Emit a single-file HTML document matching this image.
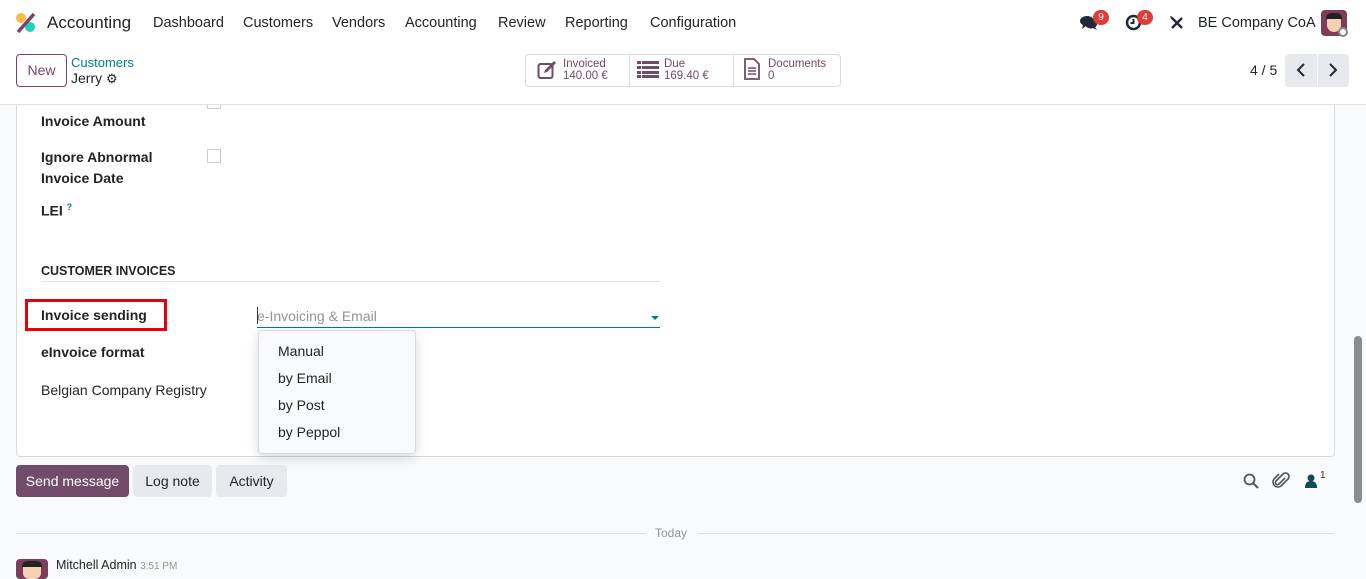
<!DOCTYPE html>
<html><head><meta charset="utf-8"><style>
*{box-sizing:border-box;margin:0;padding:0}
body{width:1366px;height:573px;overflow:hidden;background:#f9fafb;font-family:"Liberation Sans",sans-serif;color:#212529;font-size:14px;position:relative}
.abs{position:absolute}
.nav{top:0;left:0;width:1366px;height:46px;background:#fff}
.nav span.m{position:absolute;top:15px;font-size:14.5px;color:#212529}
.cp{top:46px;left:0;width:1366px;height:59px;background:#fff;border-bottom:1px solid #dee2e6}
.card{left:16px;top:105px;width:1319px;height:352px;background:#fff;border:1px solid #d8dadd;border-top:none;border-radius:0 0 4px 4px}
.lbl{position:absolute;left:41px;font-size:14px;color:#212529}
.b{font-weight:bold}
.badge{position:absolute;background:#e03a3a;color:#fff;font-size:10px;border-radius:8px;height:15px;min-width:16px;text-align:center;line-height:15px}
.btn{position:absolute;top:465px;height:32px;border-radius:4px;font-size:14px;line-height:32px;text-align:center}
</style></head><body>
<div class="abs nav">
 <svg class="abs" style="left:15px;top:12px" width="22" height="22" viewBox="0 0 22 22"><circle cx="6" cy="6" r="5" fill="#fbb945"/><circle cx="15" cy="15" r="5" fill="#1ad3bb"/><path d="M19 2L3 20" stroke="#7a4269" stroke-width="3.5"/></svg>
 <span class="m" style="left:47px;top:13px;font-size:17px">Accounting</span>
 <span class="m" style="left:153px">Dashboard</span>
 <span class="m" style="left:243px">Customers</span>
 <span class="m" style="left:332px">Vendors</span>
 <span class="m" style="left:405px">Accounting</span>
 <span class="m" style="left:498px">Review</span>
 <span class="m" style="left:565px">Reporting</span>
 <span class="m" style="left:650px">Configuration</span>
 <svg class="abs" style="left:1080px;top:15px" width="18" height="16" viewBox="0 0 18 16"><ellipse cx="7" cy="6" rx="7" ry="5" fill="#1f2937"/><ellipse cx="11" cy="9" rx="6" ry="4.5" fill="#1f2937"/><path d="M3 10l-1 4 4-3zM15 12l2 3-4-2z" fill="#1f2937"/></svg>
 <div class="badge" style="left:1093px;top:10px">9</div>
 <svg class="abs" style="left:1125px;top:14px" width="17" height="17" viewBox="0 0 17 17"><circle cx="8.5" cy="8.5" r="6.5" fill="none" stroke="#1f2937" stroke-width="2.5"/><path d="M8.5 5v4h-3" stroke="#1f2937" stroke-width="2" fill="none"/></svg>
 <div class="badge" style="left:1137px;top:10px">4</div>
 <svg class="abs" style="left:1169px;top:15px" width="16" height="16" viewBox="0 0 16 16"><path d="M3 3l10 10M13 3L3 13" stroke="#1f2937" stroke-width="2.4"/><path d="M1 1l3 1 -2 2z" fill="#1f2937"/></svg>
 <span class="m" style="left:1198px">BE Company CoA</span>
 <div class="abs" style="left:1321px;top:10px;width:26px;height:26px;border-radius:4px;background:#7d3c5a"><div class="abs" style="left:6px;top:5px;width:14px;height:17px;background:#f4d1b5;border-radius:6px 6px 7px 7px"></div><div class="abs" style="left:5px;top:3px;width:16px;height:6px;background:#222;border-radius:5px 5px 0 0"></div><div class="abs" style="left:17px;top:17px;width:10px;height:10px;border-radius:50%;background:#fff;border:2px solid #888"></div></div>
</div>
<div class="abs cp">
 <div class="abs" style="left:16px;top:8px;width:51px;height:33px;border:1px solid #7a4269;border-radius:4px;color:#7a4269;text-align:center;line-height:31px;font-size:14px">New</div>
 <div class="abs" style="left:71px;top:9px;color:#017e84;font-size:13px">Customers</div>
 <div class="abs" style="left:71px;top:24px;font-size:14px">Jerry <span style="font-size:13px">⚙</span></div>
 <div class="abs" style="left:525px;top:8px;width:316px;height:33px;border:1px solid #d8dadd;border-radius:4px"></div>
 <div class="abs" style="left:629px;top:9px;width:1px;height:31px;background:#d8dadd"></div>
 <div class="abs" style="left:733px;top:9px;width:1px;height:31px;background:#d8dadd"></div>
 <svg class="abs" style="left:537px;top:14px" width="22" height="20" viewBox="0 0 22 20"><rect x="1.5" y="4" width="14" height="14" rx="2" fill="none" stroke="#714b67" stroke-width="2"/><path d="M7 13l1-3 9-9 2 2-9 9z" fill="#714b67"/></svg>
 <div class="abs" style="left:563px;top:12px;font-size:11.5px;line-height:12px;color:#714b67">Invoiced<br>140.00 €</div>
 <svg class="abs" style="left:637px;top:15px" width="22" height="17" viewBox="0 0 22 17"><g fill="#714b67"><rect x="0" y="0" width="4" height="3"/><rect x="5" y="0" width="17" height="3"/><rect x="0" y="5" width="4" height="3"/><rect x="5" y="5" width="17" height="3"/><rect x="0" y="10" width="4" height="3"/><rect x="5" y="10" width="17" height="3"/><rect x="0" y="14" width="4" height="3"/><rect x="5" y="14" width="17" height="3"/></g></svg>
 <div class="abs" style="left:664px;top:12px;font-size:11.5px;line-height:12px;color:#714b67">Due<br>169.40 €</div>
 <svg class="abs" style="left:743px;top:12px" width="18" height="22" viewBox="0 0 18 22"><path d="M2 1h9l5 5v15H2z" fill="none" stroke="#714b67" stroke-width="1.8"/><path d="M5 10h8M5 13h8M5 16h8" stroke="#714b67" stroke-width="1.5"/></svg>
 <div class="abs" style="left:768px;top:12px;font-size:11.5px;line-height:12px;color:#714b67">Documents<br>0</div>
 <div class="abs" style="left:1250px;top:16px;font-size:14px">4 / 5</div>
 <div class="abs" style="left:1285px;top:8px;width:64px;height:33px;background:#e7e9ed;border-radius:4px"></div>
 <div class="abs" style="left:1317px;top:8px;width:1px;height:33px;background:#fff"></div>
 <svg class="abs" style="left:1295px;top:16px" width="12" height="16"><path d="M9 2L3 8l6 6" stroke="#1f2937" stroke-width="2" fill="none"/></svg>
 <svg class="abs" style="left:1327px;top:16px" width="12" height="16"><path d="M3 2l6 6-6 6" stroke="#1f2937" stroke-width="2" fill="none"/></svg>
</div>
<div class="abs card"></div>
<div class="abs" style="left:207px;top:105px;width:14px;height:4px;border:1px solid #ccc;border-top:none"></div>
<div class="lbl b" style="top:113px">Invoice Amount</div>
<div class="lbl b" style="top:147px;line-height:21px">Ignore Abnormal<br>Invoice Date</div>
<div class="abs" style="left:207px;top:149px;width:14px;height:14px;border:1px solid #ccc"></div>
<div class="lbl b" style="top:202px">LEI <sup style="color:#017e84;font-size:9px">?</sup></div>
<div class="lbl b" style="top:264px;font-size:12.5px">CUSTOMER INVOICES</div>
<div class="abs" style="left:41px;top:281px;width:619px;height:1px;background:#dee2e6"></div>
<div class="abs" style="left:25px;top:299px;width:142px;height:32px;border:3px solid #e8000b"></div>
<div class="lbl b" style="top:307px">Invoice sending</div>
<div class="abs" style="left:257px;top:308px;color:#8f959b;font-size:14px">e-Invoicing &amp; Email</div>
<div class="abs" style="left:257px;top:307px;width:1px;height:17px;background:#333"></div>
<div class="abs" style="left:651px;top:316px;border:4px solid transparent;border-top:4px solid #017e84"></div>
<div class="abs" style="left:257px;top:327px;width:403px;height:1px;background:#017e84"></div>
<div class="lbl b" style="top:344px">eInvoice format</div>
<div class="lbl" style="top:382px">Belgian Company Registry</div>
<div class="abs" style="left:258px;top:330px;width:158px;height:124px;background:#f9fafb;border:1px solid #d8dadd;border-radius:4px;box-shadow:0 4px 12px rgba(0,0,0,.15)">
 <div class="abs" style="left:19px;top:7px;line-height:27px">Manual<br>by Email<br>by Post<br>by Peppol</div>
</div>
<div class="btn" style="left:16px;width:113px;background:#714b67;color:#fff">Send message</div>
<div class="btn" style="left:133px;width:79px;background:#e7e9ed">Log note</div>
<div class="btn" style="left:216px;width:71px;background:#e7e9ed">Activity</div>
<svg class="abs" style="left:1243px;top:473px" width="16" height="16"><circle cx="6.5" cy="6.5" r="5" fill="none" stroke="#555" stroke-width="1.8"/><path d="M10 10l5 5" stroke="#555" stroke-width="2"/></svg>
<svg class="abs" style="left:1272px;top:472px" width="18" height="18" viewBox="0 0 18 18"><path d="M13 6l-6 6a2 2 0 0 1-3-3l7-7a3.5 3.5 0 0 1 5 5l-7 7a5 5 0 0 1-7-7l5-5" fill="none" stroke="#555" stroke-width="1.6"/></svg>
<svg class="abs" style="left:1305px;top:474px" width="12" height="14"><circle cx="6" cy="4" r="3.5" fill="#0c4d55"/><path d="M0 14q0-7 6-7t6 7z" fill="#0c4d55"/></svg>
<div class="abs" style="left:1320px;top:470px;font-size:10px;color:#333">1</div>
<div class="abs" style="left:16px;top:533px;width:630px;height:1px;background:#dee2e6"></div>
<div class="abs" style="left:655px;top:526px;font-size:12px;color:#8f959b">Today</div>
<div class="abs" style="left:698px;top:533px;width:636px;height:1px;background:#dee2e6"></div>
<div class="abs" style="left:16px;top:559px;width:32px;height:20px;background:#7d3c5a;border-radius:4px"><div class="abs" style="left:7px;top:3px;width:18px;height:17px;background:#f4d1b5;border-radius:6px"></div><div class="abs" style="left:6px;top:2px;width:20px;height:6px;background:#222;border-radius:5px 5px 0 0"></div></div>
<div class="abs" style="left:56px;top:558px;font-size:12.5px">Mitchell Admin <span style="font-size:10px;color:#8f959b">3:51 PM</span></div>
<div class="abs" style="left:1354px;top:336px;width:8px;height:167px;background:#8c8c8c;border-radius:4px"></div>
</body></html>
